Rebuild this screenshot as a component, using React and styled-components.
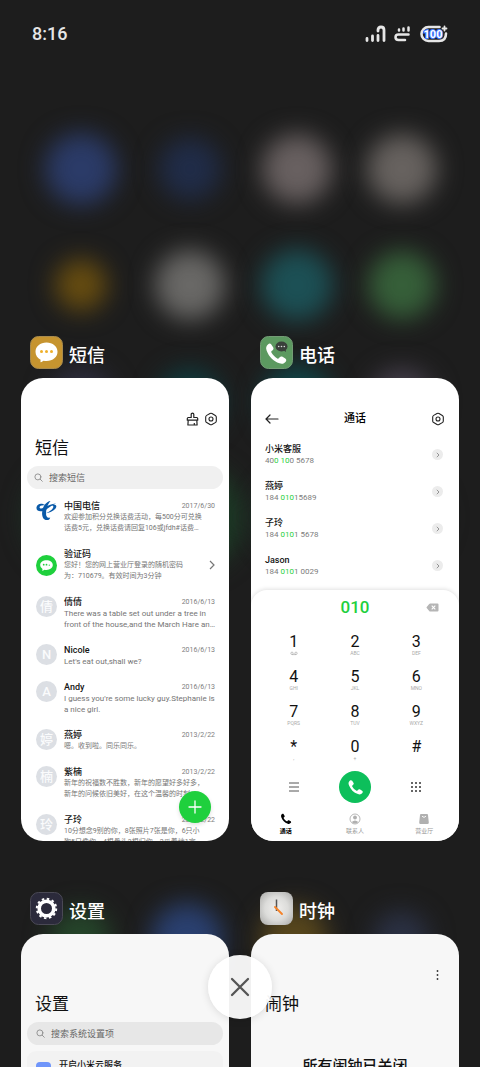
import React from "react";
import styled, { createGlobalStyle } from "styled-components";

const GlobalStyle = createGlobalStyle`
  * {
    box-sizing: border-box;
  }
  body {
    margin: 0;
    background: #1d1d1d;
    font-family: Roboto, "Noto Sans CJK SC", sans-serif;
  }
  h1, h2, h3, p, ul {
    margin: 0;
    padding: 0;
    font-weight: 400;
  }
  button {
    padding: 0;
    border: 0;
    background: none;
    font: inherit;
    color: inherit;
    cursor: pointer;
  }
  svg {
    display: block;
    flex: none;
  }
`;

const Screen = styled.main`
  position: relative;
  height: 100vh;
  overflow: hidden;
  background: #1d1d1d;
`;

/* blurred launcher behind the cards */
const Wallpaper = styled.div`
  position: absolute;
  inset: 0;
  padding: 127px 26px 0;
  display: grid;
  grid-template-columns: repeat(4, 1fr);
  grid-auto-rows: 84px;
  row-gap: 32px;
  justify-items: center;
  align-items: center;
  align-content: start;
`;
const Dock = styled(Wallpaper)`
  top: auto;
  bottom: 86px;
  padding-top: 0;
`;
const Blob = styled.span`
  width: ${(p) => p.$size || 72}px;
  height: ${(p) => p.$size || 72}px;
  border-radius: 50%;
  background: ${(p) => p.$color};
  filter: blur(12px);
`;

const StatusBar = styled.header`
  position: relative;
  display: flex;
  align-items: center;
  justify-content: space-between;
  padding: 24px 32px 0;
  color: #e6e6e6;
`;
const Time = styled.time`
  font-size: 18px;
  font-weight: 500;
  line-height: 20px;
`;
const StatusIcons = styled.div`
  display: flex;
  align-items: center;
  gap: 8px;
`;

const Recents = styled.div`
  position: relative;
  display: grid;
  grid-template-columns: 1fr 1fr;
  gap: 51px 22px;
  padding: 292px 21px 0;
`;
const AppHeader = styled.div`
  display: flex;
  align-items: center;
  gap: 6px;
  padding: 0 9px 9px;
`;
const AppName = styled.h2`
  padding-top: 6px;
  color: #fff;
  font-size: 18px;
  font-weight: 500;
  line-height: 24px;
`;
const Card = styled.div`
  position: relative;
  display: flex;
  flex-direction: column;
  aspect-ratio: 208 / 463;
  min-height: 0;
  overflow: hidden;
  border-radius: 22px;
  background: ${(p) => p.$bg || "#fff"};
`;

const Toolbar = styled.div`
  display: flex;
  flex: none;
  align-items: center;
  justify-content: ${(p) => p.$justify || "flex-end"};
  gap: 5px;
  height: 48px;
  padding: 34px ${(p) => p.$side || 11}px 0 14px;
`;
const IconButton = styled.button`
  display: flex;
`;
const ToolbarTitle = styled.h3`
  font-size: 11px;
  font-weight: 500;
  line-height: 14px;
`;
const Title = styled.h3`
  padding: 11px 14px 7px;
  color: #111;
  font-size: 17px;
  line-height: 22px;
`;
const Search = styled.label`
  display: flex;
  flex: none;
  align-items: center;
  gap: 6px;
  height: 23px;
  margin: 0 6px;
  padding: 0 ${(p) => p.$pad}px;
  border-radius: 12px;
  background: ${(p) => p.$bg};
`;
const SearchInput = styled.input`
  flex: 1;
  min-width: 0;
  padding: 0;
  border: 0;
  outline: 0;
  background: none;
  font: 9px/14px Roboto, "Noto Sans CJK SC", sans-serif;
  &::placeholder {
    color: #666;
    opacity: 1;
  }
`;

const Messages = styled.ul`
  padding: 11px 14px 0 15px;
  list-style: none;
`;
const Message = styled.li`
  display: flex;
  align-items: ${(p) => (p.$center ? "center" : "flex-start")};
  gap: 7px;
  padding-bottom: 14px;
`;
const Avatar = styled.span`
  display: flex;
  flex: none;
  align-items: center;
  justify-content: center;
  width: 21px;
  height: 21px;
  border-radius: 50%;
  background: ${(p) => p.$bg || "#dcdfe4"};
  color: #fafbfc;
  font-size: 13px;
  font-weight: 500;
  line-height: 21px;
`;
const MessageBody = styled.div`
  flex: 1;
  min-width: 0;
`;
const MessageHead = styled.div`
  display: flex;
  justify-content: space-between;
  line-height: 12px;
`;
const Name = styled.span`
  color: #151515;
  font-size: 9px;
  font-weight: 500;
  line-height: 12px;
`;
const DateText = styled.time`
  color: #808080;
  font-size: 7px;
`;
const Line = styled.p`
  color: #757575;
  font-size: ${(p) => (p.$latin ? 8 : 7)}px;
  line-height: 11px;
  white-space: nowrap;
`;
const Fab = styled.button`
  position: absolute;
  right: 18px;
  bottom: 18px;
  display: flex;
  align-items: center;
  justify-content: center;
  width: 32px;
  height: 32px;
  border-radius: 50%;
  background: #1fd03d;
  box-shadow: 0 2px 4px rgba(0, 0, 0, 0.12);
`;

const Contacts = styled.ul`
  padding: 10px 16px 6px 14px;
  list-style: none;
`;
const Contact = styled.li`
  display: flex;
  align-items: center;
  justify-content: space-between;
  height: 37px;
`;
const ContactText = styled.div`
  display: flex;
  flex-direction: column;
`;
const Phone = styled.span`
  color: #7c7c7c;
  font-size: 8px;
  line-height: 11px;
`;
const Match = styled.span`
  color: #1fd03d;
`;
const More = styled.button`
  display: flex;
  align-items: center;
  justify-content: center;
  width: 11px;
  height: 11px;
  border-radius: 50%;
  background: #ececec;
`;

const Dialer = styled.div`
  flex: 1;
  border-radius: 16px 16px 0 0;
  background: #fff;
  box-shadow: 0 -1px 4px rgba(0, 0, 0, 0.12);
`;
const Entry = styled.div`
  display: grid;
  grid-template-columns: 1fr auto 1fr;
  align-items: center;
  padding: 6px 20px 15px;
  color: #1fd03d;
  font-size: 17px;
  font-weight: 500;
  line-height: 22px;
  & > button {
    grid-column: 3;
    grid-row: 1;
    justify-self: end;
  }
  & > output {
    grid-column: 2;
    grid-row: 1;
  }
`;
const Keys = styled.div`
  display: grid;
  grid-template-columns: repeat(3, 1fr);
  row-gap: 11px;
  padding: 0 12px;
`;
const Key = styled.button`
  display: flex;
  flex-direction: column;
  align-items: center;
  height: 24px;
  color: #111;
  font-size: 16px;
  line-height: 17px;
`;
const KeyLetters = styled.small`
  height: 7px;
  color: #aaa;
  font-size: 5px;
  line-height: 7px;
`;
const Actions = styled.div`
  display: grid;
  grid-template-columns: repeat(3, 1fr);
  justify-items: center;
  align-items: center;
  padding: 9px 12px 10px;
`;
const CallButton = styled.button`
  display: flex;
  align-items: center;
  justify-content: center;
  width: 32px;
  height: 32px;
  border-radius: 50%;
  background: #0dbf5b;
`;
const Tabs = styled.nav`
  display: grid;
  grid-template-columns: repeat(3, 1fr);
`;
const Tab = styled.button`
  display: flex;
  flex-direction: column;
  align-items: center;
  gap: 1px;
  color: ${(p) => (p.$active ? "#000" : "#9a9a9a")};
  font-size: 6px;
  font-weight: ${(p) => (p.$active ? 700 : 400)};
  line-height: 9px;
`;

const SettingsGroup = styled.div`
  flex: 1;
  margin: 6px 6px 0;
  padding: 8px 9px;
  border-radius: 9px;
  background: #f2f2f2;
`;
const SettingsRow = styled.div`
  display: flex;
  gap: 8px;
`;
const CloudIcon = styled.span`
  display: flex;
  align-items: center;
  justify-content: center;
  width: 15px;
  height: 15px;
  margin-top: 3px;
  border-radius: 4px;
  background: #6f95fa;
`;
const AlarmState = styled.p`
  padding-top: 34px;
  color: #111;
  font-size: 15px;
  font-weight: 500;
  line-height: 20px;
  text-align: center;
`;

const CloseAll = styled.button`
  position: absolute;
  left: 50%;
  bottom: 48px;
  transform: translateX(-50%);
  display: flex;
  align-items: center;
  justify-content: center;
  width: 64px;
  height: 64px;
  border-radius: 50%;
  background: rgba(255, 255, 255, 0.94);
  box-shadow: 0 1px 8px rgba(0, 0, 0, 0.12);
`;

const blobs = [
  ["#2b3b68", 72], ["#202c48", 62], ["#686060", 70], ["#67625f", 70],
  ["#664c10", 52], ["#696866", 70], ["#1c5055", 72], ["#365f39", 68],
  ["#2e2e40", 66], ["#103b3e", 66], ["#104548", 72], ["#443e4a", 66],
  ["#1d3527", 110], ["#1d3a26", 108], ["#1d2c26", 80], ["#1d2624", 80],
];
const dock = [
  ["#25452a", 62], ["#2a4070", 72], ["#57461c", 68], ["#2b3144", 56],
];

const messages = [
  {
    name: "中国电信",
    date: "2017/6/30",
    logo: "telecom",
    lines: ["欢迎参加积分兑换话费活动，每500分可兑换", "话费5元，兑换话费请回复106或jfdh#话费…"],
  },
  {
    name: "验证码",
    logo: "code",
    lines: ["您好！您的网上营业厅登录的随机密码", "为：710679。有效时间为3分钟"],
  },
  {
    name: "倩倩",
    date: "2016/6/13",
    initial: "倩",
    latin: true,
    lines: ["There was a table set out under a tree in", "front of the house,and the March Hare an…"],
  },
  {
    name: "Nicole",
    date: "2016/6/13",
    initial: "N",
    latin: true,
    lines: ["Let's eat out,shall we?"],
  },
  {
    name: "Andy",
    date: "2016/6/13",
    initial: "A",
    latin: true,
    lines: ["I guess you're some lucky guy.Stephanie is", "a nice girl."],
  },
  { name: "燕婷", date: "2013/2/22", initial: "婷", lines: ["嗯。收到啦。同乐同乐。"] },
  {
    name: "紫楠",
    date: "2013/2/22",
    initial: "楠",
    lines: ["新年的祝福数不胜数，新年的愿望好多好多，", "新年的问候依旧美好，在这个温馨的时刻，…"],
  },
  {
    name: "子玲",
    date: "2013/2/22",
    initial: "玲",
    lines: ["10分想念9别的你，8张照片7张是你，6只小", "狗5只像你，4根骨头3根归你，2瓜着地1定…"],
  },
];

const contacts = [
  { name: "小米客服", parts: ["40", "0 10", "0 5678"] },
  { name: "燕婷", parts: ["184 ", "010", "15689"] },
  { name: "子玲", parts: ["184 ", "010", "1 5678"] },
  { name: "Jason", parts: ["184 ", "010", "1 0029"] },
];

const keys = [
  ["1", "voicemail"], ["2", "ABC"], ["3", "DEF"],
  ["4", "GHI"], ["5", "JKL"], ["6", "MNO"],
  ["7", "PQRS"], ["8", "TUV"], ["9", "WXYZ"],
  ["*", ","], ["0", "+"], ["#", ""],
];

const HANDSET =
  "M4.2 2.2c1.1-.9 2.3-.8 3.1.4l1.8 2.7c.7 1.1.5 2.1-.4 2.9l-1.1.9c-.5.4-.5.9-.2 1.5 1.4 2.5 3.4 4.5 5.9 5.9.6.3 1.1.3 1.5-.2l.9-1.1c.8-.9 1.800-1.100 2.900-.4l2.700 1.800c1.200.8 1.300 2 .4 3.100-1.500 1.900-3.600 2.600-6.200 1.600C9.200 19 5 14.800 2.600 8.400c-1-2.600-.3-4.700 1.600-6.200Z";

const Handset = ({ size, color }) => (
  <svg width={size} height={size} viewBox="0 0 24 24" fill={color}>
    <path d={HANDSET} />
  </svg>
);

const HexGear = () => (
  <svg width="14" height="14" viewBox="0 0 14 14" fill="none" stroke="#222" strokeWidth="1.1">
    <path d="M6 1.500q1-.6 2 0l3.300 1.900q1 .6 1 1.700v3.800q0 1.100-1 1.700L8 12.500q-1 .6-2 0l-3.300-1.900q-1-.6-1-1.700V5.100q0-1.100 1-1.700Z" />
    <circle cx="7" cy="7" r="2" />
  </svg>
);

const Broom = () => (
  <svg width="13" height="14" viewBox="0 0 13 14" fill="none" stroke="#222" strokeWidth="1.2" strokeLinejoin="round">
    <path d="M5.200 5.500V2.200q0-1 1.300-1t1.300 1v3.300h2.900q1 0 1 1v1.700H1.300V6.500q0-1 1-1Z" />
    <path d="M2.200 8.200 1.900 13h9.200l-.3-4.800M8.300 13v-2" />
  </svg>
);

const Magnifier = () => (
  <svg width="9" height="9" viewBox="0 0 9 9" fill="none" stroke="#8c8c8c" strokeWidth="0.9" strokeLinecap="round">
    <circle cx="3.900" cy="3.900" r="3" />
    <path d="m6.200 6.200 2.100 2.100" />
  </svg>
);

const Telecom = () => (
  <svg width="21" height="21" viewBox="0 0 21 21" fill="#0a5aa8">
    <path d="M10 5.500C6 2.600 1.200 3.300.5 7.200c-.5 3.600 3 5 7 3.600C12.500 9 15 5.500 20 3.600c-4.500.2-7.500 1.900-10.500 3.500C6.500 8.700 4 9 3.600 7.500 3.200 5.800 6 4.600 10 5.500Z" />
    <path d="M14.500 1C10.500 1.500 7.500 5.500 6.500 10c-1.300 5.500.5 9.800 4.200 10 2 .1 3.300-1 3.500-2.600-2.600 1.100-4.200-.6-4.200-3.900 0-4.500 1.500-9 4.500-12.500Z" />
    <path d="M15.500 5.300c2-.8 4.500-.8 4.800.8.4 2.600-4.500 6.400-10.600 7.200 3.600-1.500 6.700-3.600 7.500-5.700.5-1.300-.2-2-1.700-2.300Z" />
  </svg>
);

const CodeBubble = () => (
  <svg width="15" height="15" viewBox="0 0 15 15">
    <path d="M7.500 2.300c3.500 0 6.300 2 6.300 4.800s-2.800 4.800-6.300 4.800c-.7 0-1.300-.1-1.900-.2L3.300 12.900l.2-2C2.200 10 1.200 8.700 1.200 7.100c0-2.800 2.800-4.800 6.300-4.800Z" fill="#fff" />
    <g fill="#1fd03d">
      <circle cx="4.700" cy="6.700" r=".9" />
      <circle cx="7.500" cy="6.700" r=".9" />
      <circle cx="10.300" cy="7.200" r=".6" />
    </g>
  </svg>
);

const Signal = () => (
  <svg width="21" height="18" viewBox="0 0 21 18" fill="none" stroke="#e6e6e6" strokeWidth="2.800" strokeLinecap="round">
    <path d="M2 13.500v2M7.500 11v4.500M13 10.500v5M13 6V5q0-3 3-3t3 3v10.500" />
  </svg>
);
const Network = () => (
  <svg width="17" height="18" viewBox="0 0 17 18" fill="none" stroke="#e6e6e6" strokeWidth="2.500" strokeLinecap="round">
    <path d="M5 4.500v1M9.500 3.500v2M14.500 2.500v3M14.500 9.500H4.500q-3 0-3 2.700t3 2.700H11" />
  </svg>
);
const Battery = () => (
  <svg width="29" height="18" viewBox="0 0 29 18">
    <path d="M20.500 2H9.500a7 7 0 0 0 0 14h10.500q7 0 7-7.500" fill="none" stroke="#e6e6e6" strokeWidth="2.600" strokeLinecap="round" />
    <path d="M25.500 1.500v4M23.500 3.500h4" stroke="#e6e6e6" strokeWidth="1.800" strokeLinecap="round" />
    <text x="14" y="13" textAnchor="middle" fontSize="11" fontWeight="700" fill="#fff" stroke="#3f78ff" strokeWidth="2" paintOrder="stroke">
      100
    </text>
  </svg>
);

const Voicemail = () => (
  <svg width="8" height="7" viewBox="0 0 8 7" fill="none" stroke="#aaa" strokeWidth="0.7">
    <circle cx="2" cy="3.300" r="1.200" />
    <circle cx="6" cy="3.300" r="1.200" />
    <path d="M2 4.600h4" />
  </svg>
);

const MessagesIcon = () => (
  <svg width="33" height="33" viewBox="0 0 33 33">
    <rect x=".5" y=".5" width="32" height="32" rx="8" fill="#c6942f" stroke="#a98b4d" />
    <path d="M16.500 6.500c6.400 0 11 4 11 9.200s-4.600 9.300-11 9.300c-1 0-2-.1-2.900-.3L11 26.200q-.7.200-.5-.6l.1-1.900c-3.200-1.600-5.100-4.500-5.100-8 0-5.200 4.600-9.200 11-9.200Z" fill="#fff" />
    <g fill="#efb02a">
      <circle cx="11.500" cy="15.500" r="1.500" />
      <circle cx="16.500" cy="15.500" r="1.500" />
      <circle cx="21.500" cy="15.500" r="1.500" />
    </g>
  </svg>
);
const PhoneIcon = () => (
  <svg width="33" height="33" viewBox="0 0 33 33">
    <rect x=".5" y=".5" width="32" height="32" rx="8" fill="#5c9960" stroke="#739c75" />
    <g transform="translate(4 6)">
      <path d={HANDSET} fill="#fff" />
    </g>
    <ellipse cx="21.500" cy="10.500" rx="6" ry="5" fill="#3a403b" />
    <path d="m23 14 3 2-.5-4Z" fill="#3a403b" />
    <g fill="#ddd">
      <circle cx="18.700" cy="10.500" r=".8" />
      <circle cx="21.500" cy="10.500" r=".8" />
      <circle cx="24.300" cy="10.500" r=".8" />
    </g>
  </svg>
);
const SettingsIcon = () => (
  <svg width="33" height="33" viewBox="0 0 33 33">
    <rect x=".5" y=".5" width="32" height="32" rx="8" fill="#2b2a3b" stroke="#4a4955" />
    <circle cx="16.500" cy="16.500" r="7.300" fill="none" stroke="#fff" strokeWidth="3.600" />
    <circle cx="16.500" cy="16.500" r="9.700" fill="none" stroke="#fff" strokeWidth="2" strokeDasharray="2.500 2.579" />
  </svg>
);
const ClockIcon = () => (
  <svg width="33" height="33" viewBox="0 0 33 33">
    <defs>
      <radialGradient id="dial" r=".7">
        <stop offset="0" stopColor="#f0efed" />
        <stop offset=".5" stopColor="#dcdcda" />
        <stop offset="1" stopColor="#a8a8a6" />
      </radialGradient>
    </defs>
    <rect width="33" height="33" rx="8" fill="url(#dial)" />
    <path d="M16.500 7.500v11.500" stroke="#555" strokeWidth="1.500" />
    <path d="m15 15 7 7" stroke="#f5832a" strokeWidth="1.900" strokeLinecap="round" />
  </svg>
);

function MessagesCard() {
  return (
    <Card>
      <Toolbar>
        <IconButton aria-label="清理"><Broom /></IconButton>
        <IconButton aria-label="设置"><HexGear /></IconButton>
      </Toolbar>
      <Title>短信</Title>
      <Search $bg="#f0f0f0" $pad={7}>
        <Magnifier />
        <SearchInput type="search" aria-label="搜索短信" placeholder="搜索短信" />
      </Search>
      <Messages>
        {messages.map((m) => (
          <Message key={m.name} $center={m.logo === "code"}>
            {m.logo === "telecom" && <Avatar $bg="none"><Telecom /></Avatar>}
            {m.logo === "code" && <Avatar $bg="#1fd03d"><CodeBubble /></Avatar>}
            {m.initial && <Avatar>{m.initial}</Avatar>}
            <MessageBody>
              <MessageHead>
                <Name>{m.name}</Name>
                {m.date && <DateText>{m.date}</DateText>}
              </MessageHead>
              {m.lines.map((line) => (
                <Line key={line} $latin={m.latin}>{line}</Line>
              ))}
            </MessageBody>
            {m.logo === "code" && (
              <svg width="6" height="10" viewBox="0 0 6 10" fill="none" stroke="#777" strokeWidth="1.200">
                <path d="m1 1 4 4-4 4" />
              </svg>
            )}
          </Message>
        ))}
      </Messages>
      <Fab aria-label="新建短信">
        <svg width="14" height="14" viewBox="0 0 14 14" stroke="#fff" strokeWidth="1.300" strokeLinecap="round">
          <path d="M7 1v12M1 7h12" />
        </svg>
      </Fab>
    </Card>
  );
}

function PhoneCard() {
  return (
    <Card>
      <Toolbar $justify="space-between" $side={14}>
        <IconButton aria-label="返回">
          <svg width="14" height="10" viewBox="0 0 14 10" fill="none" stroke="#222" strokeWidth="1.200" strokeLinecap="round">
            <path d="M13 5H1M5 1 1 5l4 4" />
          </svg>
        </IconButton>
        <ToolbarTitle>通话</ToolbarTitle>
        <IconButton aria-label="设置"><HexGear /></IconButton>
      </Toolbar>
      <Contacts>
        {contacts.map(({ name, parts }) => (
          <Contact key={name}>
            <ContactText>
              <Name>{name}</Name>
              <Phone>
                {parts[0]}
                <Match>{parts[1]}</Match>
                {parts[2]}
              </Phone>
            </ContactText>
            <More aria-label={name}>
              <svg width="4" height="6" viewBox="0 0 4 6" fill="none" stroke="#8a8a8a" strokeWidth="0.900">
                <path d="m.8.800 2.200 2.200-2.200 2.200" />
              </svg>
            </More>
          </Contact>
        ))}
      </Contacts>
      <Dialer>
        <Entry>
          <output>010</output>
          <IconButton aria-label="删除">
            <svg width="13" height="9" viewBox="0 0 13 9">
              <path d="M4.200.500h7.300q1 0 1 1v6q0 1-1 1H4.200q-.6 0-1-.5L.7 5.100q-.4-.6 0-1.200L3.200 1q.4-.5 1-.5Z" fill="#b5b5b5" />
              <path d="m5.700 2.700 3.600 3.600m0-3.600L5.700 6.300" stroke="#fff" strokeWidth="1.100" />
            </svg>
          </IconButton>
        </Entry>
        <Keys>
          {keys.map(([digit, letters]) => (
            <Key key={digit}>
              {digit}
              <KeyLetters>{letters === "voicemail" ? <Voicemail /> : letters}</KeyLetters>
            </Key>
          ))}
        </Keys>
        <Actions>
          <IconButton aria-label="菜单">
            <svg width="10" height="10" viewBox="0 0 10 10" stroke="#555" strokeWidth="1">
              <path d="M0 1h10M0 5h10M0 9h10" />
            </svg>
          </IconButton>
          <CallButton aria-label="拨打"><Handset size={17} color="#fff" /></CallButton>
          <IconButton aria-label="键盘">
            <svg width="12" height="12" viewBox="0 0 12 12" fill="#333">
              {[2, 6, 10].map((y) => [2, 6, 10].map((x) => <circle key={`${x}-${y}`} cx={x} cy={y} r="1" />))}
            </svg>
          </IconButton>
        </Actions>
        <Tabs>
          <Tab $active>
            <Handset size={12} color="#000" />
            通话
          </Tab>
          <Tab>
            <svg width="12" height="12" viewBox="0 0 12 12" fill="#b0b0b0">
              <circle cx="6" cy="6" r="5" fill="none" stroke="#b0b0b0" strokeWidth=".9" />
              <circle cx="6" cy="4.500" r="1.900" />
              <path d="M2.700 9q3.300-3 6.600 0Q6 12 2.700 9Z" />
            </svg>
            联系人
          </Tab>
          <Tab>
            <svg width="12" height="12" viewBox="0 0 12 12">
              <path d="M3 1h6q1 0 1 1l.8 7.500q.1 1.500-1.400 1.500H2.600q-1.500 0-1.400-1.500L2 2q0-1 1-1Z" fill="#b0b0b0" />
              <path d="M4 3.200q2 2.400 4 0" fill="none" stroke="#fff" strokeWidth=".9" />
            </svg>
            营业厅
          </Tab>
        </Tabs>
      </Dialer>
    </Card>
  );
}

function SettingsCard() {
  return (
    <Card $bg="#f7f7f7">
      <Toolbar />
      <Title>设置</Title>
      <Search $bg="#e7e7e7" $pad={9}>
        <Magnifier />
        <SearchInput type="search" aria-label="搜索系统设置项" placeholder="搜索系统设置项" />
      </Search>
      <SettingsGroup>
        <SettingsRow>
          <CloudIcon>
            <svg width="9" height="7" viewBox="0 0 9 7" fill="#dfe8ff">
              <path d="M2.300 6.500a2 2 0 0 1 0-4 2.500 2.500 0 0 1 4.700.4 1.800 1.800 0 0 1 0 3.600Z" />
            </svg>
          </CloudIcon>
          <Name>开启小米云服务</Name>
        </SettingsRow>
      </SettingsGroup>
    </Card>
  );
}

function ClockCard() {
  return (
    <Card $bg="#f7f7f7">
      <Toolbar $side={20}>
        <IconButton aria-label="更多">
          <svg width="3" height="12" viewBox="0 0 3 12" fill="#333">
            <circle cx="1.500" cy="2" r=".9" />
            <circle cx="1.500" cy="6" r=".9" />
            <circle cx="1.500" cy="10" r=".9" />
          </svg>
        </IconButton>
      </Toolbar>
      <Title>闹钟</Title>
      <AlarmState>所有闹钟已关闭</AlarmState>
    </Card>
  );
}

const apps = [
  { name: "短信", icon: <MessagesIcon />, card: <MessagesCard /> },
  { name: "电话", icon: <PhoneIcon />, card: <PhoneCard /> },
  { name: "设置", icon: <SettingsIcon />, card: <SettingsCard /> },
  { name: "时钟", icon: <ClockIcon />, card: <ClockCard /> },
];

export default function App() {
  return (
    <>
      <GlobalStyle />
      <Screen>
        <Wallpaper>
          {blobs.map(([color, size], i) => (
            <Blob key={i} $color={color} $size={size} />
          ))}
        </Wallpaper>
        <Dock>
          {dock.map(([color, size]) => (
            <Blob key={color} $color={color} $size={size} />
          ))}
        </Dock>
        <StatusBar>
          <Time>8:16</Time>
          <StatusIcons>
            <Signal />
            <Network />
            <Battery />
          </StatusIcons>
        </StatusBar>
        <Recents>
          {apps.map((app) => (
            <section key={app.name}>
              <AppHeader>
                {app.icon}
                <AppName>{app.name}</AppName>
              </AppHeader>
              {app.card}
            </section>
          ))}
        </Recents>
        <CloseAll aria-label="关闭全部">
          <svg width="20" height="20" viewBox="0 0 20 20" stroke="#555" strokeWidth="2.300" strokeLinecap="round">
            <path d="m2 2 16 16M18 2 2 18" />
          </svg>
        </CloseAll>
      </Screen>
    </>
  );
}
